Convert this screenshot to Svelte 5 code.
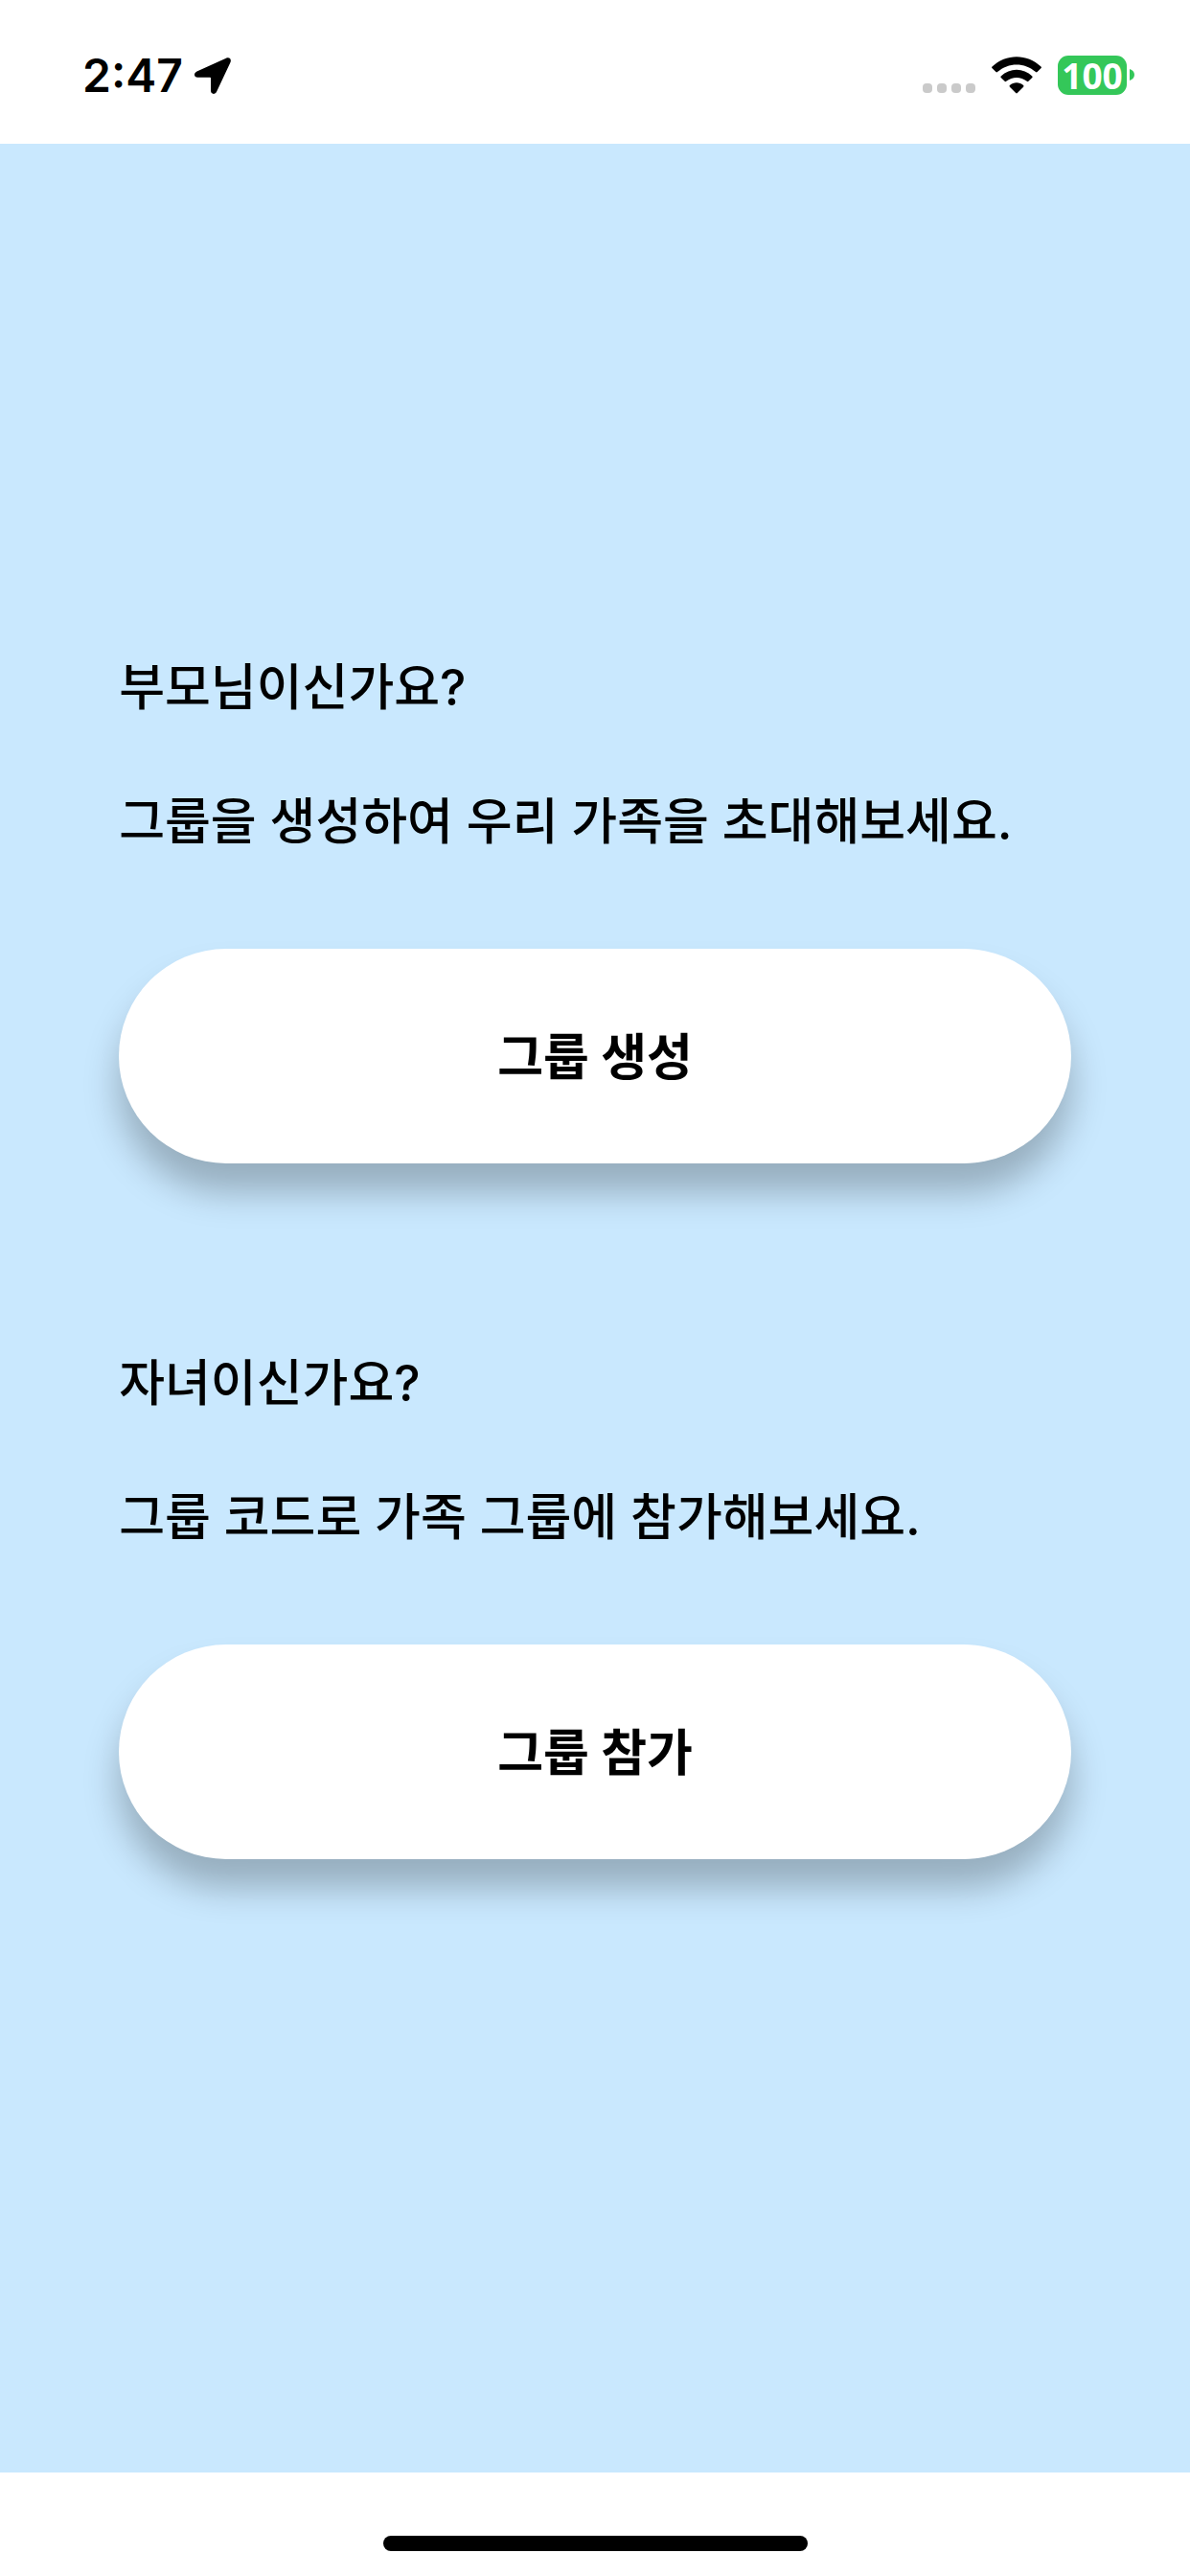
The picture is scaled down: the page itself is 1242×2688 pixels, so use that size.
<script lang="ts">
  const groups = [
    {
      question: '부모님이신가요?',
      guide: '그룹을 생성하여 우리 가족을 초대해보세요.',
      action: '그룹 생성',
    },
    {
      question: '자녀이신가요?',
      guide: '그룹 코드로 가족 그룹에 참가해보세요.',
      action: '그룹 참가',
    },
  ];
</script>

<div class="screen">
  <header class="status">
    <div class="left">
      <span class="time">2:47</span>
      <svg class="location" viewBox="0 0 38 38" width="38" height="38" aria-hidden="true">
        <path d="M33 .8 2.5 14.4C-1.3 16.2-.6 20.8 3.2 20.8H16.2Q17 20.8 17 21.6V34.6C17 38.6 21.6 39.2 23.3 35.3L37.4 5.2C38.9 1.8 36.4-.7 33 .8Z" />
      </svg>
    </div>
    <div class="right">
      <div class="signal">
        <i></i><i></i><i></i><i></i>
      </div>
      <svg class="wifi" viewBox="0 0 52 39" width="52" height="39" aria-hidden="true">
        <path d="M.5 10.6Q-.3 11.5.6 12.3L4.4 16.1Q5.2 16.9 6 16.1C17.5 5.8 34.5 5.8 46 16.1Q46.8 16.9 47.6 16.1L51.4 12.3Q52.3 11.5 51.5 10.6C37-3.2 15-3.2.5 10.6Z" />
        <path d="M9.7 20.4Q8.9 21.2 9.7 22L13.6 25.8Q14.4 26.6 15.2 25.8C21.5 20.7 30.5 20.7 36.8 25.8Q37.6 26.6 38.4 25.8L42.3 22Q43.1 21.2 42.3 20.4C33 11.4 19 11.4 9.7 20.4Z" />
        <path d="M18.9 30.1Q18.1 30.9 18.9 31.7L25.2 38Q26 38.8 26.8 38L33.1 31.7Q33.9 30.9 33.1 30.1C29 26.4 23 26.4 18.9 30.1Z" />
      </svg>
      <div class="battery">
        <span class="level">100</span>
        <svg viewBox="0 0 5 12" width="5" height="12" aria-hidden="true">
          <path d="M0 0C3 1 5 3.3 5 6S3 11 0 12Z" />
        </svg>
      </div>
    </div>
  </header>

  <main>
    {#each groups as group}
      <section>
        <p>{group.question}</p>
        <p>{group.guide}</p>
        <button type="button">{group.action}</button>
      </section>
    {/each}
  </main>

  <footer>
    <div class="indicator"></div>
  </footer>
</div>

<style>
  :global(body) {
    margin: 0;
    background-color: white;
  }

  .screen {
    display: flex;
    flex-direction: column;
    min-height: 100vh;
    color: black;
    font-family: Inter, 'Noto Sans CJK KR', sans-serif;
  }

  .status {
    display: flex;
    align-items: center;
    justify-content: space-between;
    box-sizing: border-box;
    height: 150px;
    padding: 8px 58px 0 86px;
  }

  .left,
  .right,
  .battery {
    display: flex;
    align-items: center;
  }

  .left {
    gap: 12px;
  }

  .time {
    font-size: 48px;
    font-weight: 600;
    line-height: 60px;
  }

  .right {
    gap: 17px;
    padding-bottom: 2px;
  }

  .signal {
    display: flex;
    align-self: flex-end;
    gap: 5px;
    padding-bottom: 2px;
  }

  .signal i {
    width: 10px;
    height: 10px;
    border-radius: 4px;
    background-color: #cacaca;
  }

  .battery {
    gap: 3px;
  }

  .battery svg {
    fill: #34c759;
  }

  .level {
    width: 72px;
    border-radius: 11px;
    background-color: #34c759;
    color: white;
    font-family: 'Open Sans', sans-serif;
    font-size: 37px;
    font-weight: 700;
    line-height: 41px;
    text-align: center;
  }

  main {
    display: flex;
    flex: 1;
    flex-direction: column;
    justify-content: center;
    gap: 192px;
    padding: 0 10% 110px;
    background-color: #c9e8fe;
  }

  section {
    display: flex;
    flex-direction: column;
    gap: 64px;
  }

  p {
    margin: 0;
    font-size: 52px;
    font-weight: 500;
    line-height: 76px;
  }

  button {
    margin-top: 30px;
    padding: 76px 74px 72px;
    border: none;
    border-radius: 112px;
    background-color: white;
    box-shadow: 0 30px 36px rgba(0, 0, 0, 0.25);
    color: black;
    font-family: inherit;
    font-size: 52px;
    font-weight: 700;
    line-height: 76px;
  }

  footer {
    display: flex;
    align-items: flex-end;
    justify-content: center;
    box-sizing: border-box;
    height: 108px;
    padding-bottom: 26px;
  }

  .indicator {
    width: 443px;
    height: 16px;
    border-radius: 8px;
    background-color: black;
  }
</style>
